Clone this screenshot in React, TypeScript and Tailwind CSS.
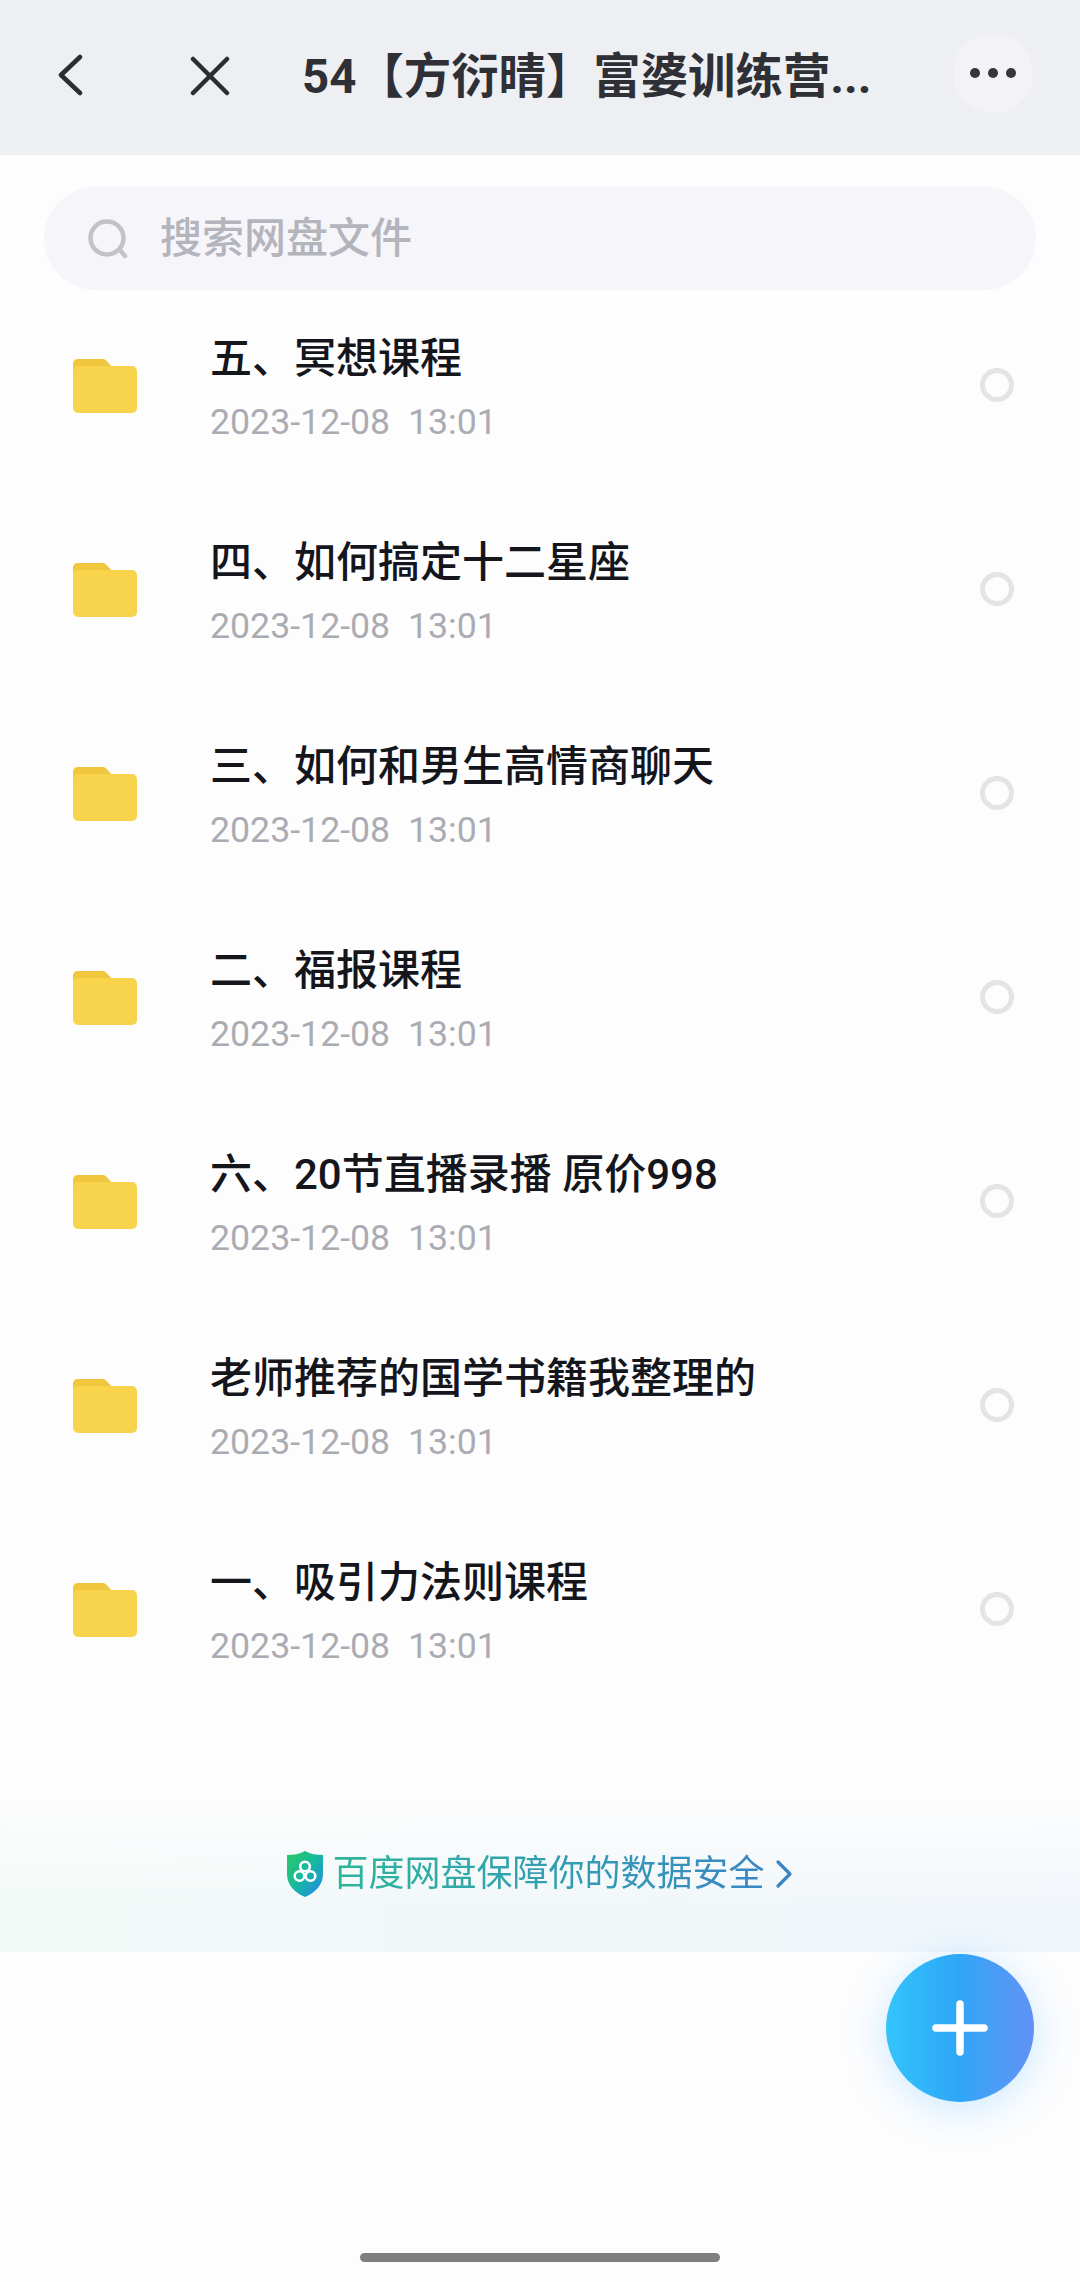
import React from "react";

const FOLDERS = [
  "五、冥想课程",
  "四、如何搞定十二星座",
  "三、如何和男生高情商聊天",
  "二、福报课程",
  "六、20节直播录播 原价998",
  "老师推荐的国学书籍我整理的",
  "一、吸引力法则课程",
];

const FONT = "font-['Roboto','Noto_Sans_CJK_SC',sans-serif]";

function FolderIcon() {
  return (
    <svg width="64" height="55" viewBox="0 0 64 55" className="shrink-0">
      <path d="M0 6a5 5 0 0 1 5-5h24c3 0 5 2 7 5l2 2h21a5 5 0 0 1 5 5v37a5 5 0 0 1-5 5H5a5 5 0 0 1-5-5z" fill="#f8d44d" />
      <path d="M0 6a5 5 0 0 1 5-5h24c3 0 5 2 7 5l2 2H5a5 5 0 0 0-5 5z" fill="#f0c73f" />
    </svg>
  );
}

function ShieldIcon() {
  return (
    <svg width="36" height="46" viewBox="0 0 36 46" className="shrink-0">
      <defs>
        <linearGradient id="shield" x1="0" y1="0" x2="1" y2="1">
          <stop offset="0" stopColor="#2ec866" />
          <stop offset="0.5" stopColor="#16b8a0" />
          <stop offset="1" stopColor="#2583f5" />
        </linearGradient>
      </defs>
      <path d="M18 0c6 3 11 4 18 4v19c0 11-8 19-18 23C8 42 0 34 0 23V4c7 0 12-1 18-4z" fill="url(#shield)" />
      <g fill="none" stroke="#fff" strokeWidth="2.6">
        <circle cx="18" cy="15.5" r="4.8" />
        <circle cx="12.5" cy="25" r="4.8" />
        <circle cx="23.5" cy="25" r="4.8" />
      </g>
    </svg>
  );
}

export default function App() {
  return (
    <div className={`relative w-[1080px] h-[2282px] overflow-hidden bg-[#fdfdfe] ${FONT}`}>
      {/* Top bar */}
      <div className="flex items-center h-[155px] bg-[#eeeff3] pb-[4px]">
        <svg width="28" height="42" viewBox="0 0 28 42" className="ml-[56px] mb-[2px] shrink-0" fill="none" stroke="#2b2d33" strokeWidth="4.5" strokeLinecap="round" strokeLinejoin="round">
          <path d="M24 3L5 21l19 18" />
        </svg>
        <svg width="42" height="40" viewBox="0 0 42 40" className="ml-[105px] shrink-0" fill="none" stroke="#2b2d33" strokeWidth="4.5" strokeLinecap="round">
          <path d="M4 3l34 34M38 3L4 37" />
        </svg>
        <div className="ml-[71px] mt-[2px] w-[570px] shrink-0 whitespace-nowrap text-[47.4px] leading-[56px] font-bold text-[#2e3036]">
          54【方衍晴】富婆训练营...
        </div>
        <div className="ml-[81px] mb-[6px] flex h-[80px] w-[80px] shrink-0 items-center justify-center gap-[8px] rounded-full bg-[#f3f3f5]">
          <span className="h-[10px] w-[10px] rounded-full bg-[#34363c]" />
          <span className="h-[10px] w-[10px] rounded-full bg-[#34363c]" />
          <span className="h-[10px] w-[10px] rounded-full bg-[#34363c]" />
        </div>
      </div>

      {/* Search */}
      <div className="h-[128px] px-[44px] pt-[32px]">
        <div className="flex h-[103px] items-center rounded-[52px] bg-[#f6f6fa] pl-[43px]">
          <svg width="42" height="42" viewBox="0 0 42 42" fill="none" stroke="#c2c3c8" strokeWidth="4.5" strokeLinecap="round">
            <circle cx="20" cy="20" r="16.5" />
            <path d="M33 32l5 6" />
          </svg>
          <span className="ml-[31px] text-[42px] leading-[56px] font-medium text-[#b3b4bc]">搜索网盘文件</span>
        </div>
      </div>

      {/* Folder rows */}
      <div className="flex flex-col">
        {FOLDERS.map((name) => (
          <div key={name} className="flex h-[204px] items-center pl-[73px] pr-[66px]">
            <FolderIcon />
            <div className="ml-[73px] min-w-0 flex-1 pt-[4px]">
              <div className="whitespace-nowrap text-[42px] leading-[56px] font-medium text-[#14161c]">{name}</div>
              <div className="mt-[13px] whitespace-pre text-[35.7px] leading-[44px] text-[#abacb3]">2023-12-08  13:01</div>
            </div>
            <span className="h-[34px] w-[34px] shrink-0 rounded-full border-[5px] border-[#e4e4e6]" />
          </div>
        ))}
      </div>

      {/* Safety banner */}
      <div className="mt-[89px] flex h-[152px] items-center justify-center bg-[linear-gradient(to_bottom,#fdfdfe,rgba(253,253,254,0)_70%),linear-gradient(to_right,#f2f9f7,#f1f6fb)] pb-[4px]">
        <ShieldIcon />
        <span className="ml-[9px] bg-gradient-to-r from-[#2eb59a] to-[#3a86c4] bg-clip-text text-[36px] leading-[48px] text-transparent">
          百度网盘保障你的数据安全
        </span>
        <svg width="18" height="30" viewBox="0 0 18 30" className="ml-[10px]" fill="none" stroke="#3a86c4" strokeWidth="3.2" strokeLinecap="round" strokeLinejoin="round">
          <path d="M3 3l12 12L3 27" />
        </svg>
      </div>

      {/* Add button */}
      <div className="absolute left-[886px] top-[1954px] flex h-[148px] w-[148px] items-center justify-center rounded-full bg-gradient-to-r from-[#33c4fb] via-[#2ea6f7] to-[#5f92f5] shadow-[0_6px_40px_rgba(90,190,255,0.32)]">
        <svg width="56" height="56" viewBox="0 0 56 56" stroke="#fff" strokeWidth="7.5" strokeLinecap="round">
          <path d="M28 4v48M4 28h48" />
        </svg>
      </div>

      {/* Home indicator */}
      <div className="absolute bottom-[20px] left-[360px] h-[9px] w-[360px] rounded-full bg-[#7f7f7f]" />
    </div>
  );
}
